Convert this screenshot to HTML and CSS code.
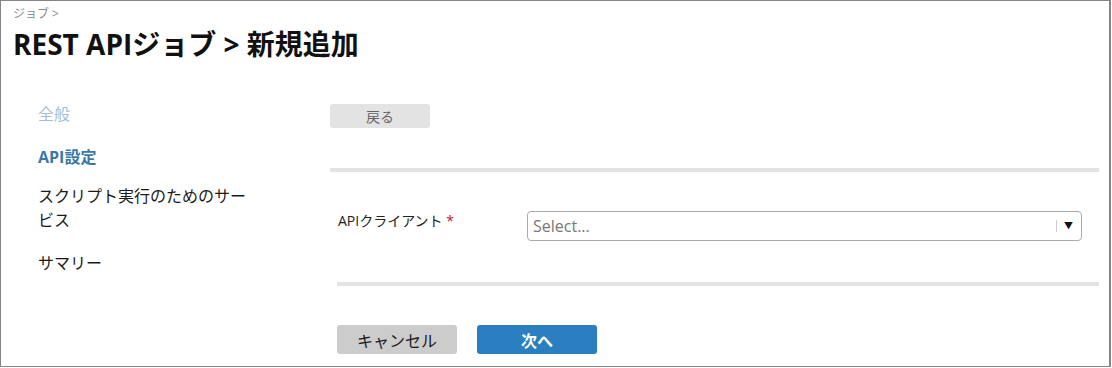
FILE: index.html
```html
<!DOCTYPE html>
<html lang="ja">
<head>
    <meta charset="UTF-8">
    <meta name="viewport" content="width=device-width, initial-scale=1.0">
    <title>REST APIジョブ > 新規追加</title>
    <link rel="stylesheet" href="styles.css">
</head>
<body>
    <div class="frame">
        <div class="page-head">
            <div class="breadcrumb">ジョブ &gt;</div>
            <h1 class="page-title">REST APIジョブ &gt; 新規追加</h1>
        </div>

        <div class="wizard">
            <ul class="steps">
                <li class="step done">全般</li>
                <li class="step active">API設定</li>
                <li class="step">スクリプト実行のためのサービス</li>
                <li class="step">サマリー</li>
            </ul>

            <div class="wizard-body">
                <button class="btn back-btn">戻る</button>
                <div class="divider"></div>

                <div class="form-row">
                    <label class="form-label" for="api-client">APIクライアント <span class="required">*</span></label>
                    <div class="select" id="api-client">
                        <span class="select-value">Select...</span>
                        <span class="select-arrow">&#9660;</span>
                    </div>
                </div>

                <div class="divider divider-form"></div>

                <div class="actions">
                    <button class="btn cancel-btn">キャンセル</button>
                    <button class="btn next-btn">次へ</button>
                </div>
            </div>
        </div>
    </div>
</body>
</html>
```

FILE: styles.css
```css
* {
    margin: 0;
    padding: 0;
    box-sizing: border-box;
}
body {
    background: #ffffff;
    font-family: "Open Sans", "Noto Sans CJK JP", sans-serif;
    color: #1a1a1a;
}
.frame {
    width: 1111px;
    height: 367px;
    border: 1px solid #858585;
    border-right-width: 2px;
    overflow: hidden;
}
.page-head {
    padding: 5px 0 0 12px;
}
.breadcrumb {
    font-size: 12px;
    line-height: 16px;
    color: #8a8a8a;
}
.page-title {
    font-size: 28px;
    line-height: 36px;
    font-weight: 700;
    color: #111111;
    margin-top: 4px;
}
.wizard {
    display: flex;
    padding-top: 40px;
}
.steps {
    list-style: none;
    width: 329px;
    padding-left: 37px;
    display: flex;
    flex-direction: column;
    gap: 19px;
}
.step {
    width: 222px;
    font-size: 16px;
    line-height: 24px;
    color: #1a1a1a;
}
.step.done {
    color: #a2bdd4;
}
.step.active {
    color: #3a78aa;
    font-weight: 700;
    margin-bottom: -4px;
}
.wizard-body {
    width: 769px;
    padding-top: 2px;
}
.btn {
    font-family: "Open Sans", "Noto Sans CJK JP", sans-serif;
    border: none;
    border-radius: 3px;
    cursor: pointer;
}
.back-btn {
    width: 100px;
    height: 24px;
    background: #e3e3e3;
    color: #666666;
    font-size: 14px;
    display: block;
}
.divider {
    height: 4px;
    background: #e3e3e3;
    margin-top: 40px;
}
.form-row {
    display: flex;
    align-items: flex-start;
    margin-top: 39px;
    padding: 0 17px 0 8px;
}
.form-label {
    width: 189px;
    font-size: 14px;
    line-height: 20px;
    color: #222222;
}
.required {
    color: #c8102e;
}
.select {
    flex: 1;
    height: 30px;
    border: 1px solid #aaaaaa;
    border-radius: 4px;
    display: flex;
    align-items: center;
    padding-left: 5px;
}
.select-value {
    flex: 1;
    font-size: 16px;
    color: #777777;
}
.select-arrow {
    font-size: 9px;
    color: #111111;
    border-left: 1px solid #cccccc;
    line-height: 12px;
    width: 24px;
    text-align: center;
    margin-right: 1px;
}
.divider-form {
    margin-left: 7px;
    margin-top: 41px;
}
.actions {
    display: flex;
    gap: 20px;
    margin-top: 39px;
    padding-left: 7px;
}
.cancel-btn,
.next-btn {
    width: 120px;
    height: 29px;
    font-size: 16px;
}
.cancel-btn {
    background: #cccccc;
    color: #1a1a1a;
}
.next-btn {
    background: #2a7fc1;
    color: #ffffff;
    font-weight: 600;
}
```
